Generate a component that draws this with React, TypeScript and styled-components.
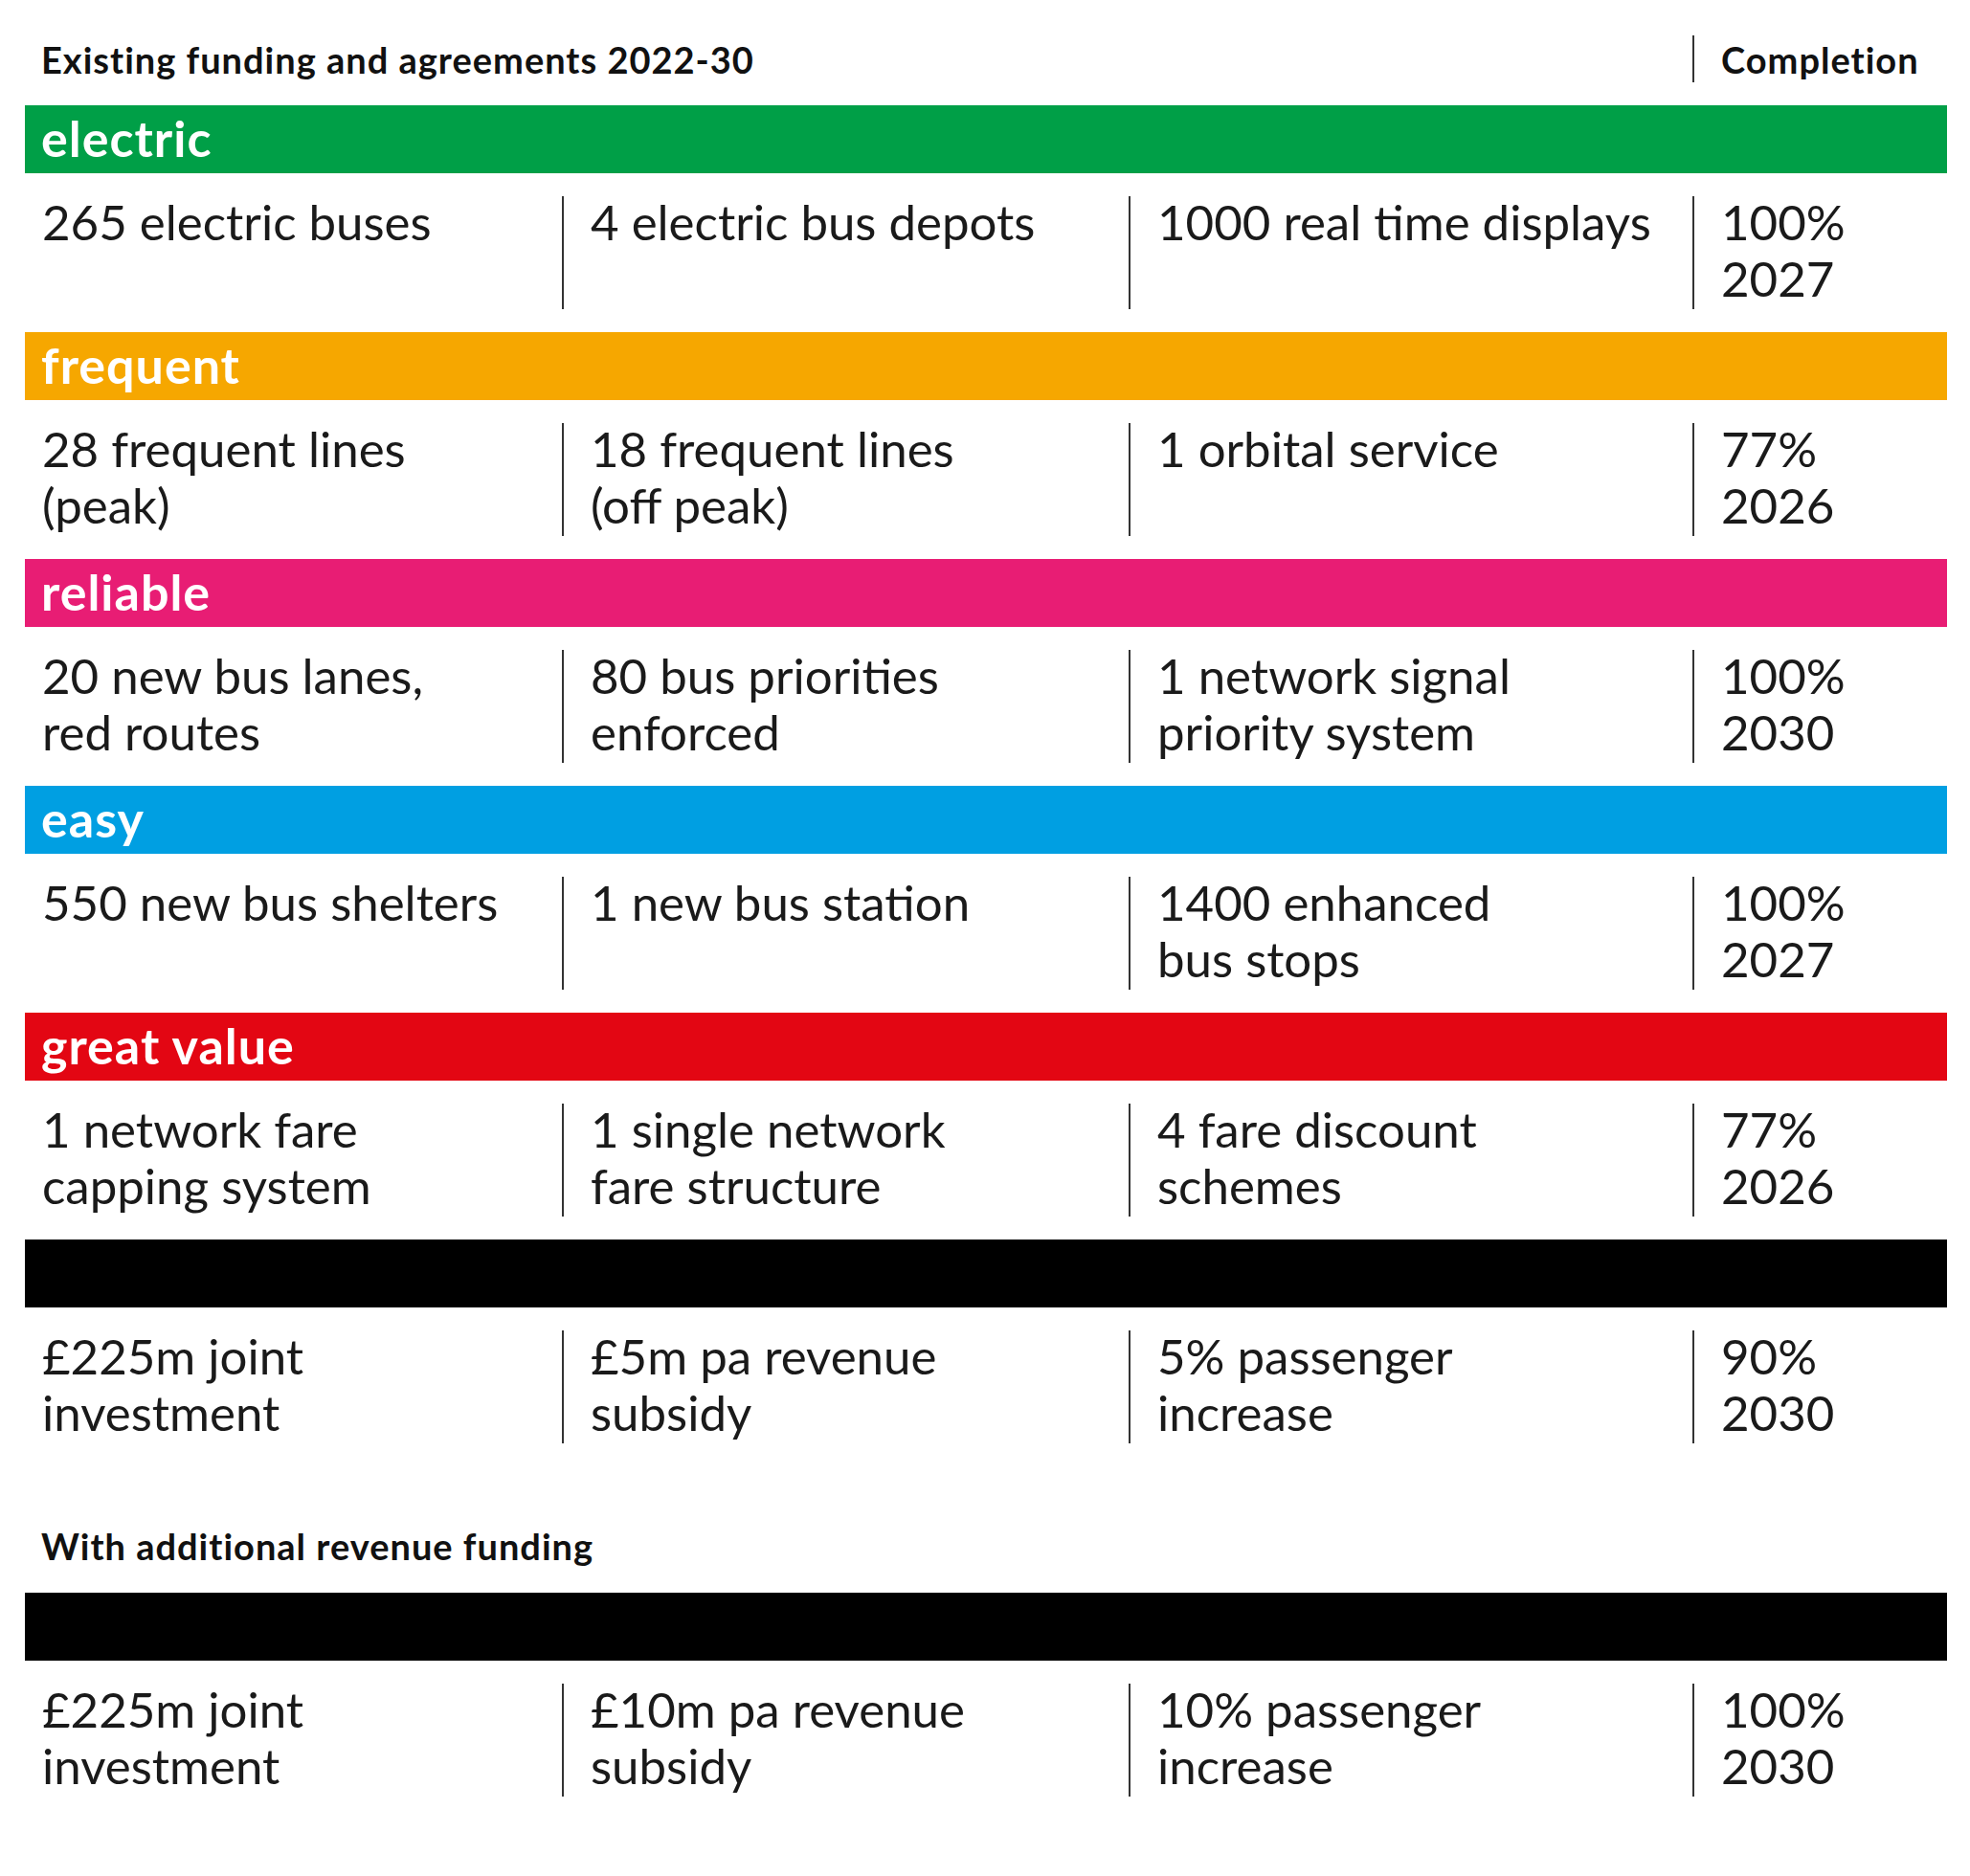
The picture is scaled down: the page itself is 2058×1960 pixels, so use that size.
import React from "react";
import styled, { createGlobalStyle } from "styled-components";

const GlobalStyle = createGlobalStyle`
  html, body {
    margin: 0;
    padding: 0;
    background: #ffffff;
  }
  body {
    font-family: "Lato", "Noto Sans", sans-serif;
    color: #111111;
  }
`;

type Section = {
  label?: string;
  color: string;
  items: string[][];
  completion: string[];
};

const existing: Section[] = [
  {
    label: "electric",
    color: "#009f47",
    items: [["265 electric buses"], ["4 electric bus depots"], ["1000 real time displays"]],
    completion: ["100%", "2027"],
  },
  {
    label: "frequent",
    color: "#f6a700",
    items: [["28 frequent lines", "(peak)"], ["18 frequent lines", "(off peak)"], ["1 orbital service"]],
    completion: ["77%", "2026"],
  },
  {
    label: "reliable",
    color: "#e81d74",
    items: [
      ["20 new bus lanes,", "red routes"],
      ["80 bus priorities", "enforced"],
      ["1 network signal", "priority system"],
    ],
    completion: ["100%", "2030"],
  },
  {
    label: "easy",
    color: "#009fe2",
    items: [["550 new bus shelters"], ["1 new bus station"], ["1400 enhanced", "bus stops"]],
    completion: ["100%", "2027"],
  },
  {
    label: "great value",
    color: "#e30613",
    items: [
      ["1 network fare", "capping system"],
      ["1 single network", "fare structure"],
      ["4 fare discount", "schemes"],
    ],
    completion: ["77%", "2026"],
  },
  {
    color: "#000000",
    items: [
      ["£225m joint", "investment"],
      ["£5m pa revenue", "subsidy"],
      ["5% passenger", "increase"],
    ],
    completion: ["90%", "2030"],
  },
];

const additional: Section[] = [
  {
    color: "#000000",
    items: [
      ["£225m joint", "investment"],
      ["£10m pa revenue", "subsidy"],
      ["10% passenger", "increase"],
    ],
    completion: ["100%", "2030"],
  },
];

function Lines({ lines }: { lines: string[] }) {
  return (
    <>
      {lines.map((l, i) => (
        <Line key={i}>{l}</Line>
      ))}
    </>
  );
}

function SectionBlock({ section }: { section: Section }) {
  return (
    <>
      <CategoryBar $color={section.color}>{section.label}</CategoryBar>
      <ItemsRow>
        {section.items.map((lines, i) => (
          <Cell key={i} $first={i === 0}>
            <Lines lines={lines} />
          </Cell>
        ))}
        <Cell>
          <Lines lines={section.completion} />
        </Cell>
      </ItemsRow>
    </>
  );
}

export default function App() {
  return (
    <Page>
      <GlobalStyle />
      <Table>
        <HeaderRow>
          <HeaderTitle>Existing funding and agreements 2022-30</HeaderTitle>
          <HeaderCompletion>Completion</HeaderCompletion>
        </HeaderRow>
        {existing.map((s, i) => (
          <SectionBlock key={i} section={s} />
        ))}
        <SubHeading>With additional revenue funding</SubHeading>
        {additional.map((s, i) => (
          <SectionBlock key={i} section={s} />
        ))}
      </Table>
    </Page>
  );
}

const Page = styled.div`
  width: 2058px;
  min-height: 1960px;
  box-sizing: border-box;
  padding: 37px 24px 0 26px;
  background: #ffffff;
`;

const Table = styled.div`
  width: 2008px;
  display: flex;
  flex-direction: column;
`;

const columns = "561px 592px 589px 266px";

const HeaderRow = styled.div`
  display: grid;
  grid-template-columns: ${columns};
  height: 49px;
  margin-bottom: 24px;
`;

const HeaderTitle = styled.div`
  grid-column: 1 / 4;
  display: flex;
  align-items: center;
  padding-left: 17px;
  font-size: 38px;
  letter-spacing: 1px;
  font-weight: 700;
  color: #111111;
`;

const HeaderCompletion = styled.div`
  display: flex;
  align-items: center;
  padding-left: 28px;
  border-left: 2px solid #333333;
  font-size: 38px;
  letter-spacing: 1px;
  font-weight: 700;
  color: #111111;
`;

const CategoryBar = styled.div<{ $color: string }>`
  height: 71px;
  display: flex;
  align-items: center;
  padding-left: 17px;
  padding-bottom: 3px;
  box-sizing: border-box;
  background: ${(p) => p.$color};
  color: #ffffff;
  font-size: 52px;
  letter-spacing: 1px;
  font-weight: 700;
`;

const ItemsRow = styled.div`
  display: grid;
  grid-template-columns: ${columns};
  padding: 24px 0;
`;

const Cell = styled.div<{ $first?: boolean }>`
  height: 118px;
  display: flex;
  flex-direction: column;
  padding-left: ${(p) => (p.$first ? "18px" : "28px")};
  border-left: ${(p) => (p.$first ? "none" : "2px solid #333333")};
`;

const Line = styled.div`
  font-size: 51px;
  line-height: 59px;
  font-weight: 400;
  color: #1a1a1a;
  white-space: nowrap;

  &:first-child {
    margin-top: -3px;
  }
`;

const SubHeading = styled.div`
  height: 40px;
  display: flex;
  align-items: center;
  margin: 63px 0 29px;
  padding-left: 17px;
  font-size: 38px;
  letter-spacing: 1px;
  font-weight: 700;
  color: #111111;
`;
